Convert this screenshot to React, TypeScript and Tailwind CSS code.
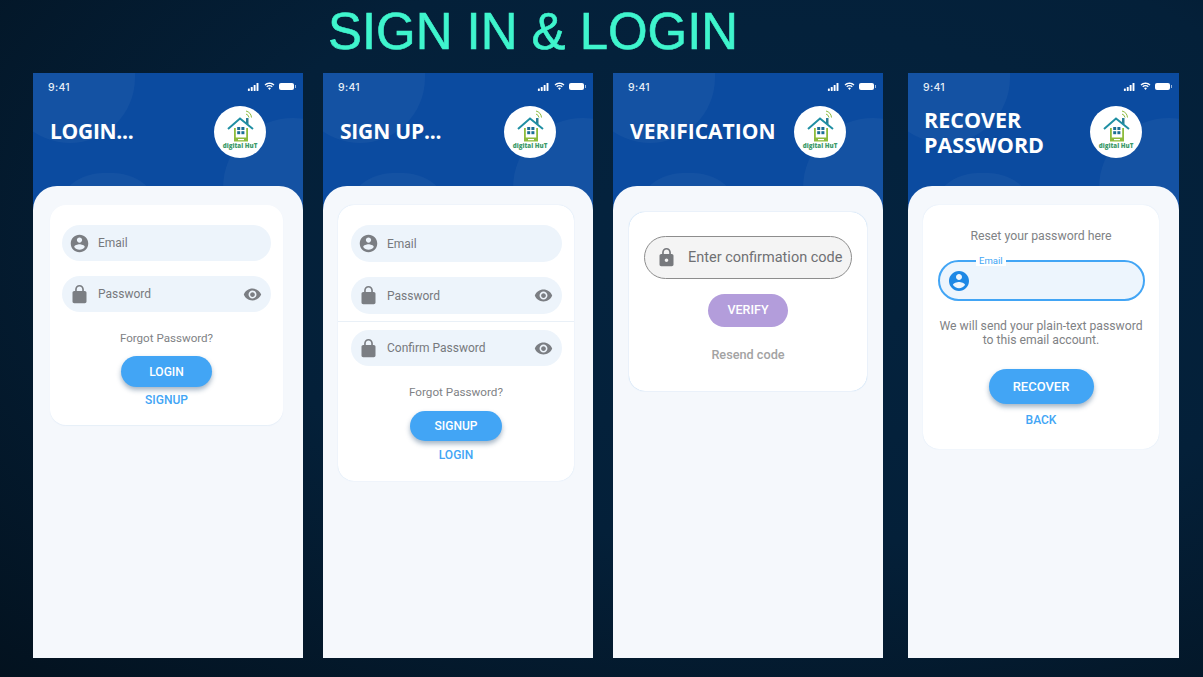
const USER =
  "M12 2C6.48 2 2 6.48 2 12s4.48 10 10 10 10-4.48 10-10S17.52 2 12 2zm0 3c1.66 0 3 1.34 3 3s-1.34 3-3 3-3-1.34-3-3 1.34-3 3-3zm0 14.2c-2.5 0-4.71-1.28-6-3.22.03-1.99 4-3.08 6-3.08 1.99 0 5.97 1.09 6 3.08-1.29 1.94-3.5 3.22-6 3.22z";
const LOCK =
  "M18 8h-1V6c0-2.76-2.24-5-5-5S7 3.24 7 6v2H6c-1.1 0-2 .9-2 2v10c0 1.1.9 2 2 2h12c1.1 0 2-.9 2-2V10c0-1.1-.9-2-2-2zm-2.9 0H8.9V6c0-1.71 1.39-3.1 3.1-3.1 1.71 0 3.1 1.39 3.1 3.1v2z";
const LOCK_HOLE =
  "M18 8h-1V6c0-2.76-2.24-5-5-5S7 3.24 7 6v2H6c-1.1 0-2 .9-2 2v10c0 1.1.9 2 2 2h12c1.1 0 2-.9 2-2V10c0-1.1-.9-2-2-2zm-6 9c-1.1 0-2-.9-2-2s.9-2 2-2 2 .9 2 2-.9 2-2 2zm3.1-9H8.9V6c0-1.71 1.39-3.1 3.1-3.1 1.71 0 3.1 1.39 3.1 3.1v2z";
const EYE =
  "M12 4.5C7 4.5 2.73 7.61 1 12c1.73 4.39 6 7.5 11 7.5s9.27-3.11 11-7.5c-1.73-4.39-6-7.5-11-7.5zM12 17c-2.76 0-5-2.24-5-5s2.24-5 5-5 5 2.24 5 5-2.24 5-5 5zm0-8c-1.66 0-3 1.34-3 3s1.34 3 3 3 3-1.34 3-3-1.34-3-3-3z";

function Icon({ d, className }: { d: string; className: string }) {
  return (
    <svg viewBox="0 0 24 24" fill="currentColor" className={className}>
      <path d={d} />
    </svg>
  );
}

function StatusBar() {
  return (
    <div className="flex h-[22px] items-end justify-between pl-[15px] pr-[7px] text-white">
      <span className="font-['Inter',sans-serif] text-[10.5px] font-medium leading-[14px] tracking-[0.3px] opacity-90">
        9:41
      </span>
      <div className="mb-[4px] flex items-center gap-[4px]">
        <svg viewBox="0 0 14 10" fill="currentColor" className="h-[8px] w-[13px]">
          <rect x="0" y="7" width="2.4" height="3" rx="0.5" />
          <rect x="3.6" y="5" width="2.4" height="5" rx="0.5" />
          <rect x="7.2" y="2.5" width="2.4" height="7.5" rx="0.5" />
          <rect x="10.8" y="0" width="2.4" height="10" rx="0.5" />
        </svg>
        <svg viewBox="0 0 16 12" fill="currentColor" className="h-[9px] w-[11px]">
          <path d="M8 2.2c2.3 0 4.4.9 6 2.4l1.2-1.3C13.3 1.4 10.8.3 8 .3S2.7 1.4.8 3.3L2 4.6c1.6-1.5 3.7-2.4 6-2.4z" />
          <path d="M8 5.8c1.3 0 2.5.5 3.4 1.3l1.3-1.3C11.4 4.6 9.8 3.9 8 3.9s-3.4.7-4.7 1.9l1.3 1.3C5.5 6.3 6.7 5.8 8 5.8z" />
          <path d="M8 7.6c-.8 0-1.6.3-2.1.9L8 11l2.1-2.5c-.5-.6-1.3-.9-2.1-.9z" />
        </svg>
        <div className="flex items-center">
          <div className="h-[7px] w-[15px] rounded-[2px] bg-white" />
          <div className="ml-[1px] h-[3px] w-[1px] bg-white/60" />
        </div>
      </div>
    </div>
  );
}

function Logo() {
  return (
    <div className="h-[52px] w-[52px] shrink-0 rounded-full bg-white">
      <svg viewBox="0 0 52 52" className="h-full w-full">
        <path d="M32 5a7.5 7.500 0 0 1 5.500 6.500M32 8a4.500 4.500 0 0 1 3 3.500" fill="none" stroke="#8dbb3c" strokeWidth="1" />
        <rect x="32" y="12" width="2.500" height="6" fill="#2a7f96" />
        <path d="M14 23 26 12.500 39 23" fill="none" stroke="#1f8fa3" strokeWidth="2" />
        <path d="M20 22v13.500h14V22h-1.800v9.500H21.800V22z" fill="#8dbb3c" />
        <rect x="24" y="33" width="6" height="1.200" fill="#fff" />
        <rect x="23.200" y="21" width="3" height="3" fill="#1c6f95" />
        <rect x="27.400" y="21" width="3" height="3" fill="#1c6f95" />
        <rect x="23.200" y="25.200" width="3" height="3" fill="#1c6f95" />
        <rect x="27.400" y="25.200" width="3" height="3" fill="#1c6f95" />
        <text x="26" y="41.500" textAnchor="middle" fontFamily="Open Sans, sans-serif" fontSize="6.200" fontWeight="800" fill="#3d9a6a">
          digital HuT
        </text>
      </svg>
    </div>
  );
}

function Phone({ title, children, className = "w-[270px]" }: { title: React.ReactNode; children: React.ReactNode; className?: string }) {
  return (
    <div className={`relative flex h-[585px] shrink-0 flex-col overflow-hidden bg-[#0b4ba0] ${className}`}>
      <div className="absolute -left-[28px] -top-[70px] h-[140px] w-[130px] rounded-full bg-white/[0.04]" />
      <div className="absolute -right-[60px] top-[45px] h-[140px] w-[140px] rounded-full bg-white/[0.04]" />
      <div className="absolute left-[20px] top-[100px] h-[100px] w-[110px] rounded-full bg-white/[0.04]" />
      <div className="relative">
        <StatusBar />
      </div>
      <div className="relative flex h-[91px] items-start justify-between pl-[17px] pr-[37px] pt-[11px]">
        <h2 className="mt-[2px] flex h-[47px] items-center font-['Open_Sans',sans-serif] text-[21px] font-bold leading-[25px] text-white">
          {title}
        </h2>
        <Logo />
      </div>
      <div className="relative flex-1 rounded-t-[24px] bg-[#f5f8fc]">{children}</div>
    </div>
  );
}

function Field({ d, label, eye, tall }: { d: string; label: string; eye?: boolean; tall?: boolean }) {
  return (
    <div className={`flex items-center rounded-full bg-[#edf4fb] pl-[7px] pr-[9px] ${tall ? "h-[37px]" : "h-[36px]"}`}>
      <Icon d={d} className="h-[21px] w-[21px] text-[#7b7e83]" />
      <span className="ml-[8px] flex-1 text-[12px] text-[#77797d]">{label}</span>
      {eye && <Icon d={EYE} className="h-[19px] w-[19px] text-[#7b7e83]" />}
    </div>
  );
}

function PrimaryButton({ label, className }: { label: string; className: string }) {
  return (
    <div className={`flex items-center justify-center rounded-full bg-[#42a5f5] font-medium text-white shadow-[0_3px_5px_rgba(30,70,110,0.4)] ${className}`}>
      {label}
    </div>
  );
}

export default function App() {
  return (
    <div className="h-[677px] w-[1203px] overflow-hidden bg-[radial-gradient(ellipse_at_65%_35%,#04233f_0%,#042039_50%,#03121f_100%)] font-['Roboto',sans-serif]">
      <h1 className="h-[73px] pl-[328px] pt-[3px] font-['Liberation_Sans',sans-serif] text-[50.900px] font-normal leading-[57px] text-[#3ff5cd] [-webkit-text-stroke:0.6px_#3ff5cd]">
        SIGN IN &amp; LOGIN
      </h1>
      <div className="flex gap-5 pl-[33px]">
        <Phone title={<span className="tracking-[-0.3px]">LOGIN...</span>}>
          <div className="ml-[17px] mt-[19px] flex h-[220px] w-[233px] flex-col rounded-[16px] bg-white px-[12px] pt-[20px] shadow-[0_1px_1px_rgba(150,190,230,0.15)]">
            <Field d={USER} label="Email" />
            <div className="mt-[15px]">
              <Field d={LOCK} label="Password" eye />
            </div>
            <p className="mt-[18px] text-center text-[11.600px] leading-[16px] text-[#808285]">Forgot Password?</p>
            <PrimaryButton label="LOGIN" className="mx-auto mt-[10px] h-[31px] w-[91px] text-[12px]" />
            <p className="mt-[6px] text-center text-[12px] font-medium leading-[14px] text-[#42a5f5]">SIGNUP</p>
          </div>
        </Phone>

        <Phone title={<span className="tracking-[-0.2px]">SIGN UP...</span>}>
          <div className="ml-[15px] mt-[19px] flex h-[276px] w-[236px] flex-col rounded-[16px] bg-white pt-[20px] shadow-[0_0_1px_rgba(110,170,230,0.4)]">
            <div className="px-[13px] pr-[12px]">
              <Field d={USER} label="Email" tall />
              <div className="mt-[15px]">
                <Field d={LOCK} label="Password" eye tall />
              </div>
            </div>
            <div className="mt-[7px] h-px bg-[#e9f0f7]" />
            <div className="mt-[8px] px-[13px] pr-[12px]">
              <Field d={LOCK} label="Confirm Password" eye />
            </div>
            <p className="mt-[18px] text-center text-[11.700px] leading-[16px] text-[#808285]">Forgot Password?</p>
            <PrimaryButton label="SIGNUP" className="mx-auto mt-[11px] h-[30px] w-[92px] text-[12px]" />
            <p className="mt-[7px] text-center text-[12px] font-medium leading-[14px] text-[#42a5f5]">LOGIN</p>
          </div>
        </Phone>

        <Phone title="VERIFICATION">
          <div className="ml-[16px] mt-[26px] flex h-[179px] w-[238px] flex-col rounded-[16px] bg-white px-[15px] pt-[24px] shadow-[0_0_1px_rgba(100,165,230,0.7)]">
            <div className="flex h-[43px] items-center rounded-full border border-[#8d8d8d] bg-[#f4f4f4] pl-[11px]">
              <Icon d={LOCK_HOLE} className="h-[21px] w-[21px] text-[#77797d]" />
              <span className="ml-[11px] whitespace-nowrap pt-[1px] text-[14.500px] text-[#6f7073]">Enter confirmation code</span>
            </div>
            <div className="mx-auto mt-[15px] flex h-[33px] w-[80px] items-center justify-center rounded-full bg-[#b39ddb] text-[12.500px] font-medium text-white">
              VERIFY
            </div>
            <p className="mt-[20px] text-center text-[12.700px] font-medium leading-[16px] text-[#a3a3a3]">Resend code</p>
          </div>
        </Phone>

        <Phone title={<span className="-ml-px block pt-[1px] text-[21.500px]">RECOVER<br />PASSWORD</span>} className="ml-[5px] w-[271px]">
          <div className="ml-[15px] mt-[19px] flex h-[244px] w-[236px] flex-col rounded-[16px] bg-white px-[15px] pt-[23px] shadow-[0_0_1px_rgba(110,170,230,0.3)]">
            <p className="text-center text-[12.300px] leading-[16px] text-[#808285]">Reset your password here</p>
            <div className="relative mt-[16px] flex h-[41px] w-[207px] items-center rounded-full border-2 border-[#42a5f5] bg-[#edf5fd] pl-[7px]">
              <span className="absolute -top-[7px] left-[36px] bg-white px-[3px] text-[9.500px] leading-[11px] text-[#42a5f5]">Email</span>
              <Icon d={USER} className="h-[24px] w-[24px] text-[#1e88e5]" />
            </div>
            <p className="mt-[18px] text-center text-[12.200px] leading-[14px] text-[#808285]">
              We will send your plain-text password
              <br />
              to this email account.
            </p>
            <PrimaryButton label="RECOVER" className="mx-auto mt-[22px] h-[35px] w-[105px] text-[13px]" />
            <p className="mt-[9px] text-center text-[12px] font-medium leading-[14px] text-[#42a5f5]">BACK</p>
          </div>
        </Phone>
      </div>
    </div>
  );
}
